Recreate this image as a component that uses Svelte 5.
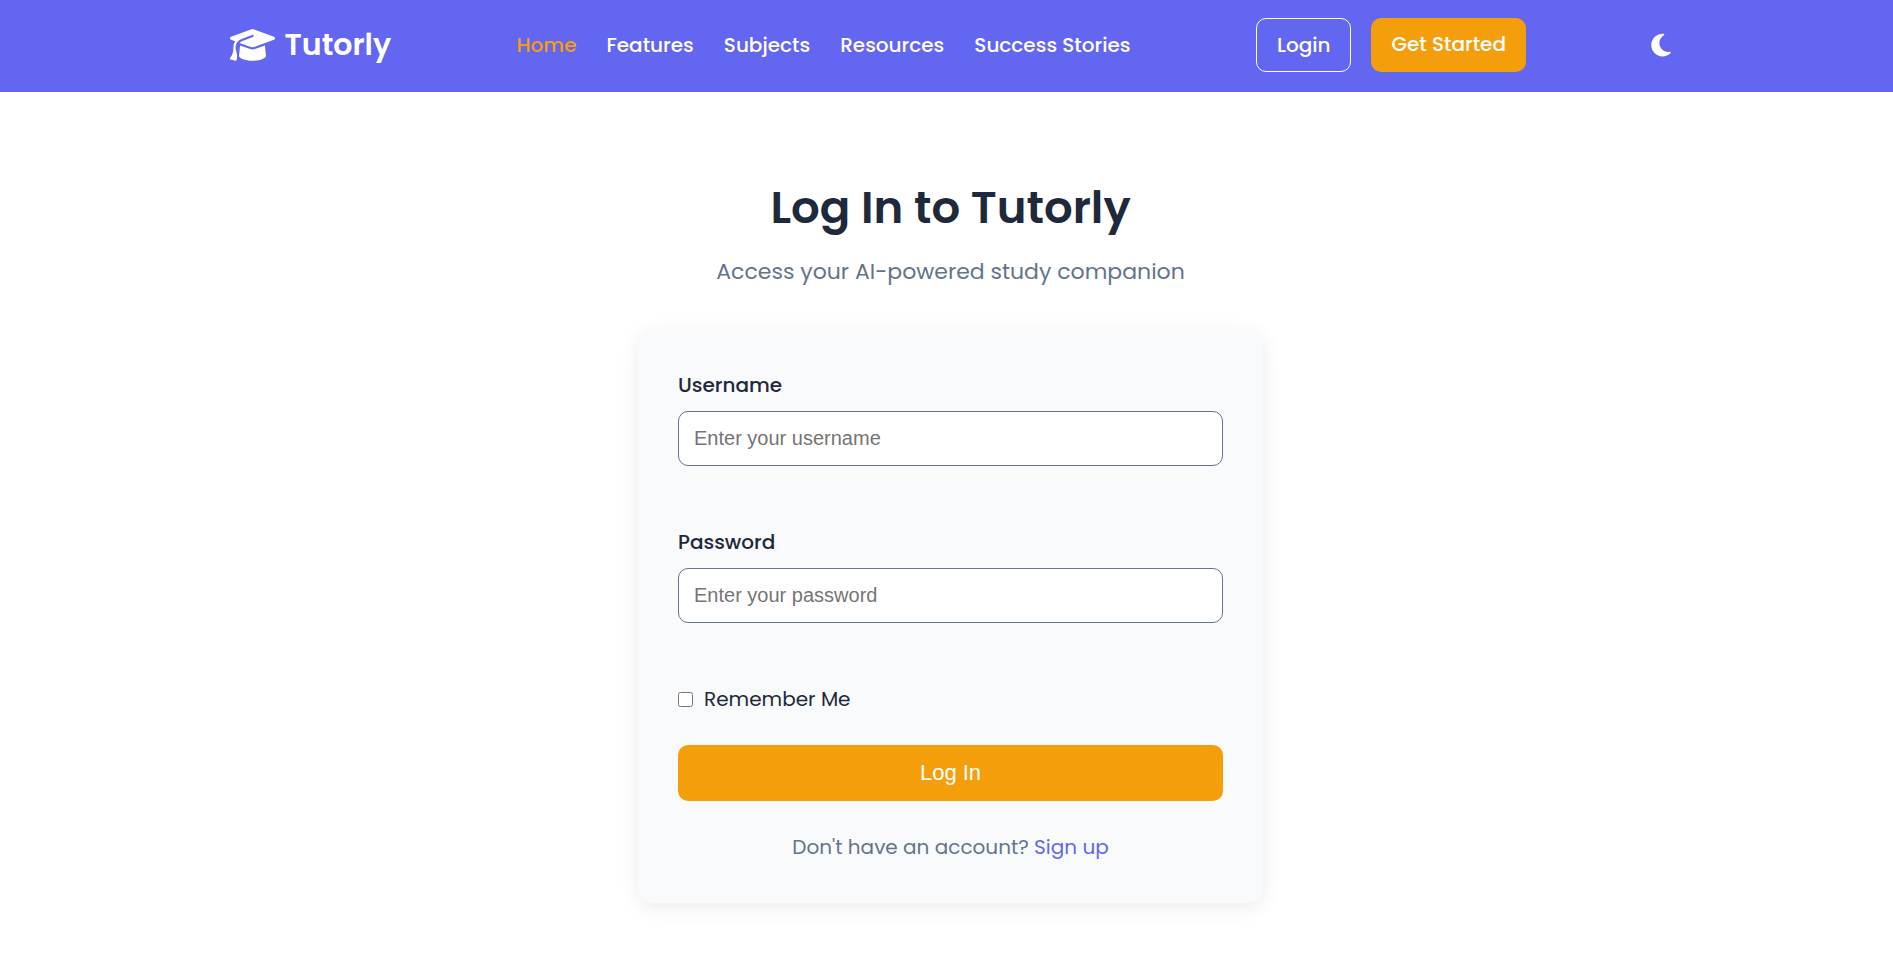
<script>
  const links = ['Home', 'Features', 'Subjects', 'Resources', 'Success Stories'];
  let username = $state('');
  let password = $state('');
  let remember = $state(false);
</script>

<header>
  <div class="bar">
    <a class="logo" href="#home">
      <svg viewBox="0 0 640 512" aria-hidden="true"><path d="M320 32c-8.100 0-16.100 1.400-23.700 4.100L15.800 137.400C6.300 140.900 0 149.900 0 160s6.300 19.100 15.800 22.600l57.900 20.900C57.300 229.300 48 259.800 48 291.900v28.100c0 28.400-10.800 57.700-22.300 80.800c-6.500 13-13.900 25.800-22.500 37.600C0 442.700-.9 448.300 .9 453.400s6 8.900 11.200 10.200l64 16c4.200 1.100 8.700 .3 12.400-2s6.300-6.100 7.100-10.400c8.600-42.800 4.300-81.200-2.100-108.700C90.300 344.300 86 329.800 80 316.500V291.900c0-30.200 10.200-58.700 27.900-81.500c12.900-15.500 29.600-28 49.200-35.700l157-61.700c8.200-3.200 17.500 .8 20.700 9s-.8 17.500-9 20.700l-157 61.700c-12.400 4.900-23.300 12.400-32.200 21.600l159.600 57.600c7.600 2.700 15.600 4.100 23.700 4.100s16.100-1.400 23.700-4.100L624.200 182.600c9.500-3.400 15.800-12.500 15.800-22.600s-6.300-19.100-15.800-22.600L343.700 36.100C336.100 33.400 328.100 32 320 32zM128 408c0 35.300 86 72 192 72s192-36.700 192-72L496.700 262.600 354.500 314c-11.100 4-22.800 6-34.500 6s-23.500-2-34.500-6L143.300 262.600 128 408z" /></svg>
      <span>Tutorly</span>
    </a>
    <nav>
      {#each links as link, i}
        <a class:active={i === 0} href="#{link.toLowerCase().replace(' ', '-')}">{link}</a>
      {/each}
    </nav>
    <div class="actions">
      <a class="btn outline" href="#login">Login</a>
      <a class="btn solid" href="#start">Get Started</a>
    </div>
    <button class="theme" type="button" aria-label="Toggle dark mode">
      <svg viewBox="0 0 384 512" aria-hidden="true"><path d="M223.500 32C100 32 0 132.300 0 256S100 480 223.500 480c60.600 0 115.500-24.200 155.800-63.400c5-4.900 6.300-12.500 3.100-18.700s-10.100-9.700-17-8.500c-9.800 1.700-19.800 2.600-30.100 2.600c-96.900 0-175.500-78.800-175.500-176c0-65.800 36-123.100 89.300-153.300c6.100-3.500 9.200-10.500 7.700-17.300s-7.300-11.900-14.300-12.500c-6.300-.5-12.600-.8-19-.8z" /></svg>
    </button>
  </div>
</header>

<main>
  <h1>Log In to Tutorly</h1>
  <p class="lead">Access your AI-powered study companion</p>
  <form onsubmit={(e) => e.preventDefault()}>
    <div class="field">
      <label for="username">Username</label>
      <input id="username" type="text" placeholder="Enter your username" bind:value={username} />
    </div>
    <div class="field">
      <label for="password">Password</label>
      <input id="password" type="password" placeholder="Enter your password" bind:value={password} />
    </div>
    <div class="remember">
      <input id="remember" type="checkbox" bind:checked={remember} />
      <label for="remember">Remember Me</label>
    </div>
    <button class="submit" type="submit">Log In</button>
    <p class="signup">Don't have an account? <a href="#signup">Sign up</a></p>
  </form>
</main>

<style>
  :global(body) {
    margin: 0;
    background: #fff;
    color: #1e293b;
    font-family: Poppins, Inter, sans-serif;
    font-size: 20px;
    line-height: 32px;
  }
  * {
    box-sizing: border-box;
  }
  a {
    text-decoration: none;
  }
  header {
    padding: 18px 0 20px 8px;
    background: #6366f1;
  }
  .bar {
    display: flex;
    align-items: center;
    justify-content: space-between;
    max-width: 1442px;
    margin: 0 auto;
  }
  .logo {
    display: flex;
    align-items: center;
    gap: 10px;
    color: #fff;
    font-size: 30px;
    font-weight: 600;
  }
  .logo svg {
    width: 45px;
    height: 36px;
    fill: currentColor;
  }
  nav {
    display: flex;
    gap: 30px;
  }
  nav a {
    color: #fff;
    font-weight: 500;
  }
  nav a.active {
    color: #f59e0b;
  }
  .actions {
    display: flex;
    gap: 20px;
  }
  .btn {
    padding: 10px 20px;
    border-radius: 10px;
    color: #fff;
    font-weight: 500;
  }
  .outline {
    border: 1px solid #fff;
  }
  .solid {
    background: #f59e0b;
  }
  .theme {
    display: flex;
    padding: 0;
    border: 0;
    background: none;
    color: #fff;
    cursor: pointer;
  }
  .theme svg {
    width: 20px;
    height: 26px;
    fill: currentColor;
  }
  main {
    padding: 80px 0 60px 8px;
    text-align: center;
  }
  h1 {
    margin: 0 0 10px;
    font-size: 45px;
    font-weight: 600;
    line-height: 72px;
  }
  .lead {
    margin: 0 0 40px;
    color: #64748b;
    font-size: 22px;
    line-height: 35px;
  }
  form {
    max-width: 625px;
    margin: 0 auto;
    padding: 40px;
    border-radius: 16px;
    background: #f8fafc;
    box-shadow: 0 5px 20px rgba(0, 0, 0, 0.08);
    text-align: left;
  }
  .field {
    display: flex;
    flex-direction: column;
    gap: 10px;
    margin-bottom: 60px;
  }
  .field label {
    font-weight: 500;
  }
  .field input {
    height: 55px;
    padding: 0 15px;
    border: 1px solid #64748b;
    border-radius: 10px;
    background: #fff;
    color: #1e293b;
    font-family: "Liberation Sans", Arial, sans-serif;
    font-size: 20px;
  }
  .field input::placeholder {
    color: #757575;
  }
  .remember {
    display: flex;
    align-items: center;
    gap: 11px;
    margin-bottom: 30px;
  }
  .remember input {
    width: 15px;
    height: 15px;
    margin: 0;
  }
  .submit {
    display: block;
    width: 100%;
    height: 56px;
    padding: 0;
    border: 0;
    border-radius: 10px;
    background: #f59e0b;
    color: #fff;
    font-family: "Liberation Sans", Arial, sans-serif;
    font-size: 22px;
    cursor: pointer;
  }
  .signup {
    margin: 30px 0 0;
    color: #64748b;
    text-align: center;
  }
  .signup a {
    color: #6366f1;
  }
</style>
